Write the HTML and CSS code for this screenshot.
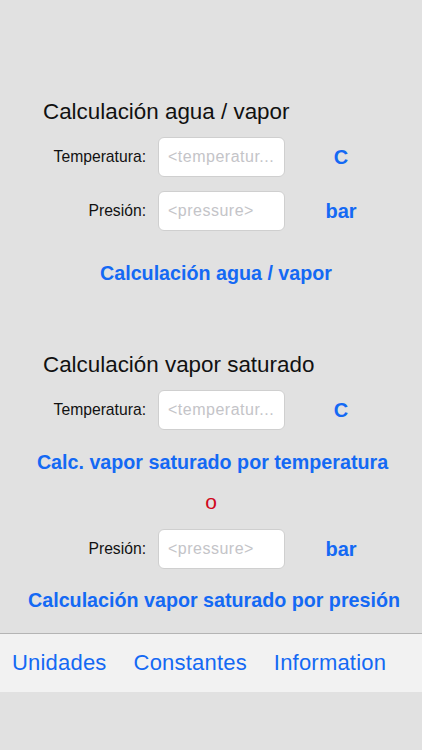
FILE: index.html
```html
<!DOCTYPE html>
<html>
<head>
    <meta charset="utf-8">
    <meta name="viewport" content="width=device-width, initial-scale=1.0">
    <link rel="stylesheet" href="styles.css">
</head>
<body>
<div class="screen">
    <div class="content">
        <div class="section first">
            <div class="sectionTitle">Calculación agua / vapor</div>
            <div class="row">
                <label class="rowLabel">Temperatura:</label>
                <input class="field" type="text" placeholder="&lt;temperatur...">
                <span class="unit">C</span>
            </div>
            <div class="row">
                <label class="rowLabel">Presión:</label>
                <input class="field" type="text" placeholder="&lt;pressure&gt;">
                <span class="unit">bar</span>
            </div>
            <div class="action btnWater">Calculación agua / vapor</div>
        </div>

        <div class="section second">
            <div class="sectionTitle">Calculación vapor saturado</div>
            <div class="row">
                <label class="rowLabel">Temperatura:</label>
                <input class="field" type="text" placeholder="&lt;temperatur...">
                <span class="unit">C</span>
            </div>
            <div class="action btnTemp">Calc. vapor saturado por temperatura</div>
            <div class="orText">o</div>
            <div class="row">
                <label class="rowLabel">Presión:</label>
                <input class="field" type="text" placeholder="&lt;pressure&gt;">
                <span class="unit">bar</span>
            </div>
            <div class="action btnPress">Calculación vapor saturado por presión</div>
        </div>
    </div>

    <div class="tabBar">
        <span class="tab">Unidades</span>
        <span class="tab">Constantes</span>
        <span class="tab">Information</span>
    </div>
</div>
</body>
</html>
```

FILE: styles.css
```css
html, body{
    margin: 0px;
    padding: 0px;
    background-color: #e1e1e1;
    font-family: "Liberation Sans", Arial, sans-serif;
}
.screen{
    width: 422px;
    height: 750px;
    display: flex;
    flex-direction: column;
}
.content{
    height: 633px;
}
.section.first{
    padding-top: 99px;
}
.section.second{
    padding-top: 67px;
}
.sectionTitle{
    padding-left: 43px;
    font-size: 22.4px;
    line-height: 26px;
    color: #111;
}
.row{
    display: flex;
    align-items: center;
    height: 40px;
    margin-top: 14px;
}
.sectionTitle + .row{
    margin-top: 12px;
}
.rowLabel{
    text-align: right;
    padding-right: 12px;
    box-sizing: border-box;
    width: 158px;
    font-size: 15.7px;
    color: #111;
}
.field{
    width: 127px;
    height: 40px;
    box-sizing: border-box;
    border: 1px solid #cfcfcf;
    border-radius: 6px;
    background-color: #fff;
    padding: 0 9px;
    font-family: "Liberation Sans", Arial, sans-serif;
    font-size: 16px;
    letter-spacing: 0.5px;
    outline: none;
}
.field::placeholder{
    color: #c4c4c8;
}
.unit{
    width: 112px;
    text-align: center;
    font-size: 20px;
    font-weight: bold;
    color: #1469f4;
}
.action{
    text-align: center;
    font-size: 19.7px;
    font-weight: bold;
    color: #1469f4;
    line-height: 24px;
    cursor: pointer;
}
.btnWater{
    margin-top: 30px;
    padding-left: 10px;
}
.btnTemp{
    margin-top: 20px;
    padding-left: 3px;
}
.orText{
    text-align: center;
    color: #d0081c;
    font-size: 21px;
    line-height: 22px;
    margin-top: 17px;
}
.orText + .row{
    margin-top: 16px;
}
.btnPress{
    margin-top: 19px;
    padding-left: 6px;
}
.tabBar{
    height: 58px;
    border-top: 1px solid #b4b4b4;
    background-color: #f2f2f2;
    display: flex;
    align-items: center;
    gap: 27px;
    padding-left: 12px;
}
.tab{
    font-size: 22px;
    letter-spacing: 0.2px;
    color: #1469f4;
    cursor: pointer;
}
```
